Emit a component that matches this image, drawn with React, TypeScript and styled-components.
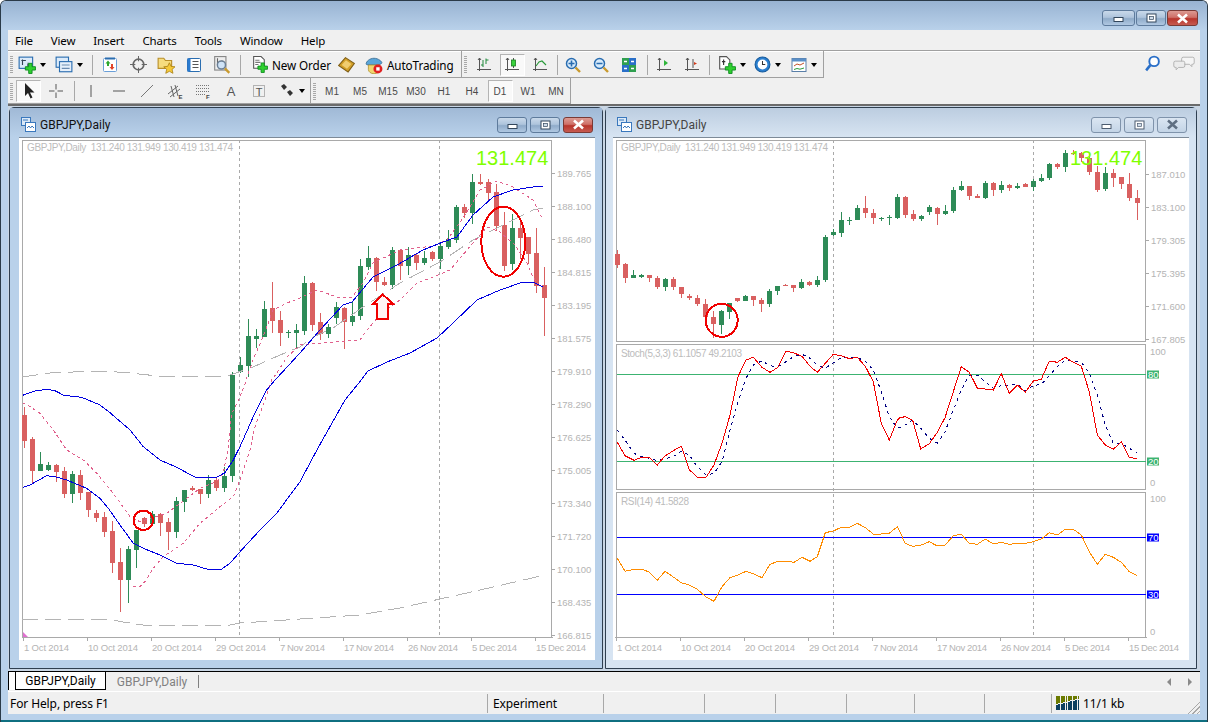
import React from 'react'
import styled, { createGlobalStyle } from 'styled-components'

const GlobalStyle = createGlobalStyle`
  html, body { margin: 0; padding: 0; background: #fff; overflow: hidden; }
  #root { width: 1208px; height: 722px; }
`

// candles read off the big chart: body top, body bottom, wick top, wick bottom (page y)
type Candle = { up: boolean; t: number; b: number; wt: number; wb: number }
const a = (up: number, t: number, b: number, wt: number, wb: number): Candle => ({ up: !!up, t: 380 + t / 3, b: 380 + b / 3, wt: 380 + wt / 3, wb: 380 + wb / 3 })
const c = (up: number, t: number, b: number, wt: number, wb: number): Candle => ({ up: !!up, t: 140 + t / 3, b: 140 + b / 3, wt: 140 + wt / 3, wb: 140 + wb / 3 })

const candles: Candle[] = [
  a(0, 105, 182, 80, 203), a(0, 177, 272, 171, 310), a(1, 252, 272, 216, 272), a(1, 255, 270, 247, 272),
  a(0, 255, 276, 252, 305), a(0, 273, 341, 262, 353), a(1, 282, 341, 273, 368), a(0, 285, 339, 270, 360),
  a(0, 336, 389, 335, 411), a(0, 400, 414, 390, 426), a(0, 411, 456, 395, 471), a(0, 453, 548, 423, 579),
  a(0, 546, 599, 505, 695), a(1, 507, 600, 499, 669), a(1, 450, 510, 450, 564), a(0, 414, 432, 411, 441),
  a(1, 402, 432, 393, 432), a(0, 402, 429, 399, 468), a(0, 426, 456, 414, 510), a(1, 363, 456, 351, 474),
  a(1, 330, 366, 330, 396), a(0, 324, 330, 318, 333), a(0, 327, 342, 327, 372), a(1, 300, 342, 285, 354),
  a(0, 300, 324, 294, 333), a(1, 288, 324, 261, 336), c(1, 706, 1008, 696, 1026),
  c(1, 675, 696, 652, 700), c(1, 588, 678, 537, 712), c(1, 588, 597, 567, 624), c(1, 507, 591, 483, 591),
  c(0, 504, 543, 426, 579), c(0, 540, 579, 513, 618), c(1, 575, 578, 570, 594), c(1, 570, 579, 552, 624),
  c(1, 429, 573, 408, 585), c(0, 429, 555, 426, 573), c(0, 546, 582, 519, 600), c(1, 561, 582, 552, 594),
  c(1, 501, 534, 486, 552), c(0, 504, 546, 501, 627), c(1, 528, 546, 486, 558), c(1, 378, 528, 357, 540),
  c(1, 354, 381, 318, 390), c(0, 354, 426, 351, 453), c(0, 426, 435, 411, 438), c(1, 330, 435, 321, 447),
  c(0, 330, 378, 327, 420), c(1, 345, 378, 321, 405), c(0, 345, 369, 339, 390), c(1, 354, 369, 333, 375),
  c(0, 336, 358, 333, 363), c(1, 318, 358, 306, 387), c(1, 297, 321, 270, 327), c(1, 201, 300, 195, 309),
  c(0, 201, 219, 192, 234), c(1, 126, 219, 102, 252), c(0, 126, 132, 102, 135), c(0, 126, 159, 117, 183),
  c(0, 156, 258, 132, 273), c(0, 255, 378, 216, 393), c(1, 264, 372, 222, 390), c(0, 264, 294, 234, 357),
  c(0, 291, 342, 291, 372), c(0, 339, 438, 264, 459), c(0, 435, 474, 381, 587),
]

type Pts = number[][]
const z = (ox: number, oy: number, p: Pts) => p.map(([x, y]) => `${(ox + x / 3).toFixed(1)},${(oy + y / 3).toFixed(1)}`).join(' ')
const abs = (p: Pts) => p.map(([x, y]) => `${x},${y}`).join(' ')

const upperBlue = z(20, 380, [[8, 46], [45, 33], [80, 28], [105, 32], [130, 45], [150, 48], [185, 52], [240, 75], [270, 98], [330, 150], [370, 200], [420, 240], [470, 262], [530, 294], [590, 292], [615, 278], [640, 240], [660, 200], [700, 110], [740, 30], [765, 0]])
  + ' ' + abs([[276, 379], [300, 353], [320, 330], [343, 305], [352, 302], [373, 277], [397, 265], [423, 250], [443, 242], [457, 237], [473, 215], [493, 197], [513, 190], [533, 187], [543, 186]])
const lowerBlue = z(20, 380, [[8, 322], [30, 315], [80, 287], [105, 290], [140, 300], [200, 325], [240, 355], [265, 385], [300, 435], [340, 490], [370, 505], [420, 525], [470, 550], [520, 555], [560, 567], [605, 567], [630, 550], [660, 515], [720, 450], [770, 400], [840, 305]])
  + ' ' + abs([[318, 448], [345, 400], [362, 379], [368, 371], [387, 362], [410, 353], [437, 338], [453, 323], [477, 300], [500, 290], [523, 282], [533, 282], [543, 287]])
const upperPink = z(20, 380, [[8, 68], [30, 80], [60, 100], [100, 150], [140, 210], [190, 240], [230, 280], [280, 340], [330, 410], [360, 425], [400, 412], [440, 400], [480, 370], [540, 325], [590, 305], [610, 280], [625, 200], [635, 100], [660, 50], [680, 0]])
  + ' ' + abs([[247, 377], [253, 360], [263, 337], [273, 310], [287, 303], [300, 298], [317, 290], [337, 297], [352, 297], [363, 283], [373, 263], [400, 250], [433, 246], [447, 240], [463, 218], [480, 190], [497, 181], [513, 187], [533, 200], [542, 218]])
const lowerPink = z(20, 380, [[340, 618], [360, 620], [375, 605], [400, 565], [430, 530], [490, 490], [540, 430], [600, 380], [640, 350], [660, 300], [690, 210], [705, 140], [735, 60], [755, 0]])
  + ' ' + abs([[277, 373], [287, 357], [300, 345], [333, 342], [360, 340], [367, 330], [380, 315], [400, 300], [417, 283], [433, 277], [450, 270], [473, 243], [487, 227], [500, 232], [515, 245], [527, 263], [533, 277], [538, 285]])
const grayTop = abs([[22, 377], [50, 373], [73, 372], [103, 371], [130, 373], [167, 377], [227, 376], [253, 367], [280, 355], [300, 347], [313, 337], [333, 328], [363, 307], [400, 283], [440, 262], [473, 240], [513, 220], [533, 210], [543, 208]])
const grayBottom = abs([[22, 619], [108, 619], [123, 622], [143, 625], [230, 625], [240, 623], [273, 621], [300, 619], [360, 615], [400, 608], [480, 590], [545, 575]])

const stochMain = z(610, 345, [[22, 292], [45, 332], [72, 346], [95, 337], [118, 337], [142, 360], [165, 333], [190, 317], [214, 304], [238, 374], [262, 397], [288, 397], [312, 360], [336, 295], [360, 210], [384, 95], [408, 45], [430, 37], [456, 67], [480, 82], [504, 67], [528, 18], [552, 24], [576, 34], [600, 64], [622, 82], [646, 55], [670, 28], [694, 32], [718, 41], [742, 37], [766, 64], [790, 110], [814, 235], [838, 285], [862, 225]])
  + ' ' + z(900, 345, [[0, 218], [15, 215], [38, 226], [62, 312], [88, 296], [112, 262], [135, 218], [184, 65], [208, 82], [232, 129], [256, 132], [280, 135], [304, 86], [328, 145], [352, 120], [376, 142], [400, 108], [424, 103], [448, 48], [472, 52], [496, 37], [520, 52], [544, 64], [568, 140], [592, 270], [616, 300], [640, 313], [664, 290], [688, 337], [710, 341]])
const stochSignal = z(610, 345, [[22, 255], [45, 285], [72, 325], [95, 335], [118, 340], [142, 347], [190, 335], [214, 318], [238, 330], [262, 365], [288, 390], [312, 385], [336, 350], [360, 255], [384, 170], [408, 100], [432, 58], [456, 48], [480, 62], [504, 65], [528, 50], [552, 34], [576, 28], [600, 40], [622, 60], [646, 70], [670, 53], [694, 38], [718, 36], [742, 38], [766, 48], [790, 75], [814, 140], [838, 215], [862, 250]])
  + ' ' + z(900, 345, [[10, 244], [38, 225], [62, 250], [88, 280], [112, 295], [135, 260], [160, 195], [184, 135], [208, 90], [232, 90], [256, 110], [280, 130], [304, 122], [352, 118], [376, 138], [400, 122], [424, 118], [448, 92], [472, 65], [496, 45], [520, 47], [544, 52], [568, 85], [592, 150], [616, 240], [640, 295], [664, 295], [688, 310], [710, 322]])
const rsiLine = z(610, 345, [[22, 640], [45, 679], [72, 673], [95, 673], [118, 681], [142, 706], [165, 679], [190, 696], [214, 713], [238, 720], [262, 733], [288, 756], [312, 769], [336, 725], [360, 698], [384, 690], [408, 679], [430, 686], [456, 698], [480, 658], [504, 649], [528, 649], [552, 652], [576, 637], [600, 649], [622, 635], [646, 563], [670, 558], [694, 547], [718, 547], [742, 535], [766, 548], [790, 567], [814, 567], [838, 565], [862, 545]])
  + ' ' + z(900, 345, [[0, 560], [15, 595], [38, 604], [62, 601], [88, 590], [112, 603], [135, 601], [160, 572], [184, 568], [208, 595], [232, 598], [256, 582], [280, 597], [304, 592], [328, 598], [352, 595], [376, 595], [400, 590], [424, 582], [448, 563], [472, 570], [496, 553], [520, 553], [544, 570], [568, 620], [592, 658], [616, 628], [640, 637], [664, 652], [688, 680], [710, 691]])

const dates = ['1 Oct 2014', '10 Oct 2014', '20 Oct 2014', '29 Oct 2014', '7 Nov 2014', '17 Nov 2014', '26 Nov 2014', '5 Dec 2014', '15 Dec 2014']
const leftPrices = ['189.765', '188.100', '186.480', '184.815', '183.195', '181.575', '179.910', '178.290', '176.625', '175.005', '173.340', '171.720', '170.100', '168.435', '166.815']
const leftPriceY = [173, 206, 239, 272, 305, 338, 371, 404, 437, 470, 503, 536, 569, 602, 635]
const rightPrices = ['187.010', '183.100', '179.305', '175.395', '171.600', '167.805']
const rightPriceY = [174, 207, 240, 273, 306, 339]

const AxisText = styled.text`
  font-family: 'Liberation Sans', sans-serif;
  font-size: 9.5px;
  fill: #b4b4b4;
`

const HeadText = styled.text`
  font-family: 'Liberation Sans', sans-serif;
  font-size: 10px;
  fill: #bcbcbc;
`

const BigPrice = styled.text`
  font-family: 'Liberation Sans', sans-serif;
  font-size: 20px;
  fill: #7fff00;
`

const TagText = styled.text`
  font-family: 'Liberation Sans', sans-serif;
  font-size: 9.5px;
  fill: #fff;
`

const FibMark = styled.text`
  font-family: 'Liberation Sans', sans-serif;
  font-size: 6px;
  font-weight: 700;
  fill: #444;
`

const IconLetter = styled.text<{ $small?: boolean }>`
  font-family: 'Liberation Sans', sans-serif;
  font-size: ${(p) => (p.$small ? 11 : 13)}px;
  font-weight: 400;
  text-anchor: middle;
  fill: #555;
`

// the chart lines are GDI lines in the picture: no smoothing
const Curve = styled.polyline`
  fill: none;
  shape-rendering: crispEdges;
`

const RedCircle = styled.ellipse`
  fill: none;
  stroke: #f00000;
  stroke-width: 2;
  shape-rendering: crispEdges;
`

function Candles({ x0, map }: { x0: number; map: (y: number) => number }) {
  return (
    <g shapeRendering="crispEdges">
      {candles.map((k, i) => {
        const x = x0 + i * 8
        const col = k.up ? '#2e8b57' : '#d96060'
        return (
          <g key={i}>
            <rect x={x} y={map(k.wt)} width={1} height={Math.max(1, map(k.wb) - map(k.wt))} fill={col} />
            <rect x={x - 2} y={map(k.t)} width={5} height={Math.max(1, map(k.b) - map(k.t))} fill={col} />
          </g>
        )
      })}
    </g>
  )
}

function TimeAxis({ x0, bottom, right }: { x0: number; bottom: number; right: number }) {
  return (
    <g>
      {dates.map((d, i) => {
        const x = x0 + i * 64
        return (
          <g key={d}>
            <rect x={x} y={bottom} width={1} height={3} fill="#a9a9a9" />
            <AxisText x={x + 1} y={bottom + 13} textLength={d.length > 10 ? 50 : 45}>{d}</AxisText>
          </g>
        )
      })}
      <rect x={x0 - 1} y={bottom - 1} width={right - x0 + 2} height={1} fill="#a9a9a9" />
    </g>
  )
}

function LeftChart() {
  return (
    <ChartSvg viewBox="19 138 576 521" width={576} height={521}>
      <g stroke="#a9a9a9" fill="none" shapeRendering="crispEdges">
        <path d="M239.5 140V637M439.5 140V637" strokeDasharray="3 3" />
        <path d="M22.5 140H551.5V637M22.5 140V637" />
      </g>
      <HeadText x={27} y={151} textLength={206}>GBPJPY,Daily&#160;&#160;131.240 131.949 130.419 131.474</HeadText>
      <BigPrice x={476} y={165}>131.474</BigPrice>
      <Candles x0={24} map={(y) => y} />
      <Curve points={grayTop} stroke="#b4b4b4" strokeDasharray="16 7" />
      <Curve points={grayBottom} stroke="#b4b4b4" strokeDasharray="16 7" />
      <Curve points={upperPink} stroke="#e0608c" strokeDasharray="3 3" />
      <Curve points={lowerPink} stroke="#e0608c" strokeDasharray="3 3" />
      <Curve points={upperBlue} stroke="#0000e0" />
      <Curve points={lowerBlue} stroke="#0000e0" />
      <RedCircle cx={143.3} cy={520.3} rx={9.7} ry={9.7} />
      <RedCircle cx={503.3} cy={241.7} rx={22} ry={35} />
      <path d="M382.7 294.5L372.7 304H377.3V319H388.3V304H393.3Z" fill="#fff5f5" stroke="#f00000" strokeWidth={2} shapeRendering="crispEdges" />
      <path d="M23 632v6h6z" fill="#e070d0" />
      {leftPrices.map((p, i) => (
        <g key={p}>
          <rect x={552} y={leftPriceY[i]} width={3} height={1} fill="#a9a9a9" />
          <AxisText x={557} y={leftPriceY[i] + 3.5}>{p}</AxisText>
        </g>
      ))}
      <TimeAxis x0={23} bottom={638} right={552} />
    </ChartSvg>
  )
}

function RightChart() {
  return (
    <ChartSvg viewBox="613 138 576 521" width={576} height={521}>
      <g stroke="#a9a9a9" fill="none" shapeRendering="crispEdges">
        <rect x={616.5} y={140.5} width={529} height={201} fill="#fff" />
        <rect x={616.5} y={344.5} width={529} height={145} fill="#fff" />
        <rect x={616.5} y={492.5} width={529} height={145} fill="#fff" />
        <path d="M833.5 140V637M1033.5 140V637" strokeDasharray="3 3" />
      </g>
      <HeadText x={621} y={151} textLength={207}>GBPJPY,Daily&#160;&#160;131.240 131.949 130.419 131.474</HeadText>
      <Candles x0={617} map={(y) => 190 + (y - 267) * 0.43} />
      <BigPrice x={1070} y={165}>131.474</BigPrice>
      <RedCircle cx={721.7} cy={320.3} rx={16} ry={16.5} />
      {rightPrices.map((p, i) => (
        <g key={p}>
          <rect x={1146} y={rightPriceY[i]} width={3} height={1} fill="#a9a9a9" />
          <AxisText x={1151} y={rightPriceY[i] + 3.5}>{p}</AxisText>
        </g>
      ))}

      <HeadText x={621} y={357} textLength={121}>Stoch(5,3,3) 61.1057 49.2103</HeadText>
      <g shapeRendering="crispEdges">
        <rect x={617} y={374} width={529} height={1} fill="#3cb371" />
        <rect x={617} y={461} width={529} height={1} fill="#3cb371" />
        <rect x={617} y={537} width={529} height={1} fill="#0000ff" />
        <rect x={617} y={594} width={529} height={1} fill="#0000ff" />
      </g>
      <Curve points={stochSignal} stroke="#000080" strokeDasharray="3 4" />
      <Curve points={stochMain} stroke="#f00000" />
      <AxisText x={1150} y={355}>100</AxisText>
      <LevelTag x={1147} y={370.5} color="#3cb371" label="80" />
      <LevelTag x={1147} y={457.5} color="#3cb371" label="20" />
      <AxisText x={1150} y={486}>0</AxisText>

      <HeadText x={621} y={505} textLength={68}>RSI(14) 41.5828</HeadText>
      <Curve points={rsiLine} stroke="#ff8c00" />
      <AxisText x={1150} y={502}>100</AxisText>
      <LevelTag x={1147} y={533.5} color="#0000ff" label="70" />
      <LevelTag x={1147} y={590.5} color="#0000ff" label="30" />
      <AxisText x={1150} y={635}>0</AxisText>
      <TimeAxis x0={616} bottom={638} right={1146} />
    </ChartSvg>
  )
}

function LevelTag({ x, y, color, label }: { x: number; y: number; color: string; label: string }) {
  return (
    <g>
      <rect x={x} y={y} width={12} height={8} fill={color} />
      <TagText x={x + 1} y={y + 7.5}>{label}</TagText>
    </g>
  )
}

/* toolbar drawings */
const Plus = ({ x = 0, y = 0 }: { x?: number; y?: number }) => (
  <path transform={`translate(${x} ${y})`} d="M3 0h3v3h3v3H6v3H3V6H0V3h3z" fill="#2fd02f" stroke="#0b8a1e" strokeWidth={0.8} />
)
const Axes = () => <path d="M3.5 1v13M1 12.5h14M2 3l1.5-2L5 3" fill="none" stroke="#555" strokeWidth={1} />

const icons: Record<string, React.ReactNode> = {
  newChart: (<><rect x={1} y={1} width={12} height={10} fill="#dcebfa" stroke="#2a6db0" /><path d="M3 4h4M4 3v5M8 8h3M9 6v4" stroke="#345" fill="none" /><Plus x={6.5} y={6.5} /></>),
  profiles: (<><rect x={1} y={1} width={11} height={9} fill="#dcebfa" stroke="#2a6db0" /><rect x={4} y={5} width={11} height={9} fill="#e6f0fb" stroke="#2a6db0" /><path d="M6 8h7M6 11h7" stroke="#6a8bb0" /></>),
  market: (<><rect x={1.5} y={1.5} width={13} height={13} rx={1} fill="#fff" stroke="#6a9fd8" /><path d="M3 1.5h10" stroke="#2a6db0" strokeWidth={2} /><path d="M6 3.5l2.5 3H7V9H5V6.5H3.5z" fill="#2fa82f" /><path d="M10 13l-2.5-3H9V7h2v3h1.5z" fill="#e0442a" /></>),
  navigator: (<><circle cx={8} cy={8} r={5} fill="none" stroke="#666" strokeWidth={1.6} /><path d="M8 0v5M8 11v5M0 8h5M11 8h5" stroke="#666" strokeWidth={1} /></>),
  favorites: (<><path d="M1 2h5l1.5 2H13v7H1z" fill="#f6dc7e" stroke="#b98f2a" /><path d="M11 6l1.5 3.2 3.5.4-2.6 2.3.8 3.5-3.2-1.8-3.2 1.8.8-3.5L6 9.6l3.5-.4z" fill="#f5c93a" stroke="#a87e10" strokeWidth={0.7} /></>),
  terminal: (<><rect x={1.5} y={1.5} width={13} height={13} rx={1} fill="#fff" stroke="#2a6db0" /><rect x={1.5} y={1.5} width={3} height={13} fill="#2a7bd0" /><path d="M6.5 4.5h6M6.5 7.5h6M6.5 10.5h6" stroke="#555" /></>),
  tester: (<><rect x={1.5} y={0.5} width={10} height={12} fill="#eee" stroke="#888" /><path d="M4 2v6M8 4v5" stroke="#666" /><circle cx={7.5} cy={8} r={3.6} fill="#cfe3f7" stroke="#6b7f95" strokeWidth={1.3} /><path d="M10.5 11l4 4" stroke="#c99a2e" strokeWidth={2} /></>),
  newOrder: (<><path d="M2.5 .5h7l3 3v8h-10z" fill="#fff" stroke="#555" /><path d="M4 4h4M4 6h5M4 8h3" stroke="#777" /><Plus x={6.5} y={6.5} /></>),
  editor: (<><path d="M.5 9L7 1.5l8.5 5.5-6 8z" fill="#d3a028" stroke="#80601a" /><path d="M3.5 8.5L7.5 4l5 3.5-4 4.5z" fill="#f0cd70" /></>),
  auto: (<><path d="M1 7c0-2 3-5 7-5s7 3 7 4c0 1-2 2-7 2S1 8 1 7z" fill="#5aa5d8" stroke="#34688f" strokeWidth={0.7} /><path d="M3 8h10v4a4 3 0 0 1-10 0z" fill="#f0d56e" stroke="#b1922f" strokeWidth={0.7} /><circle cx={11.5} cy={11.5} r={4} fill="#e02020" /><rect x={10} y={10} width={3} height={3} fill="#fff" /></>),
  bars: (<><Axes /><path d="M7 3v7M7 8H5M10 1.5V7M10 3h2.5" stroke="#1f8a3a" fill="none" /></>),
  candle: (<><Axes /><path d="M9.5 1v10" stroke="#555" /><rect x={7.5} y={3} width={4} height={6} fill="#39d23c" stroke="#1a7a1f" strokeWidth={0.8} /></>),
  line: (<><Axes /><path d="M4 9l3-4 3-1 4 4" fill="none" stroke="#2a9a3a" strokeWidth={1.1} /></>),
  zoomIn: (<><circle cx={6.5} cy={6.5} r={5} fill="#d6eafb" stroke="#2a6db0" strokeWidth={1.5} /><path d="M6.5 3.5v6M3.5 6.5h6" stroke="#2a6db0" strokeWidth={1.6} /><path d="M10.5 10.5l4.5 4.5" stroke="#c99a2e" strokeWidth={2.4} /></>),
  zoomOut: (<><circle cx={6.5} cy={6.5} r={5} fill="#d6eafb" stroke="#2a6db0" strokeWidth={1.5} /><path d="M3.5 6.5h6" stroke="#2a6db0" strokeWidth={1.6} /><path d="M10.5 10.5l4.5 4.5" stroke="#c99a2e" strokeWidth={2.4} /></>),
  tile: (<><rect x={1} y={1} width={7} height={7} fill="#2f9f4f" /><rect x={8} y={1} width={7} height={7} fill="#2a6fc8" /><rect x={1} y={8} width={7} height={7} fill="#2a6fc8" /><rect x={8} y={8} width={7} height={7} fill="#2f9f4f" /><path d="M3 4.5h3M10 4.5h3M3 11.5h3M10 11.5h3" stroke="#fff" strokeWidth={1.5} /></>),
  scroll: (<><Axes /><path d="M8 3v6l4-3z" fill="#2fb53a" /></>),
  shift: (<><Axes /><path d="M9 2v9" stroke="#555" /><path d="M10 5l3 1.5-3 1.5z" fill="#d23c1c" /></>),
  indicator: (<><path d="M1.5 .5h6l3 3v8h-9z" fill="#fff" stroke="#555" /><path d="M5 3v5M3.5 5h3" stroke="#333" /><Plus x={6.5} y={6.5} /></>),
  clock: (<><circle cx={8} cy={8} r={7} fill="#2a7fd0" stroke="#155a9c" /><circle cx={8} cy={8} r={4.6} fill="#fff" /><path d="M8 4.8V8h2.6" fill="none" stroke="#333" /></>),
  template: (<><rect x={1} y={1.5} width={14} height={13} fill="#fff" stroke="#5a7fa8" /><rect x={1} y={1.5} width={14} height={3} fill="#5a8fc8" /><path d="M3 9l3-2 3 1 4-2" fill="none" stroke="#c0502a" /><path d="M3 12.5l3-1 3 .7 4-1.2" fill="none" stroke="#2a9a3a" /></>),
  cursor: <path d="M4 0v13l3-3 2.5 5.5 2-1L9 9.5h4.5z" fill="#222" />,
  cross: <path d="M8 1v5.5M8 9.5V15M1 8h5.5M9.5 8H15" stroke="#555" fill="none" />,
  vline: <path d="M8 2v12" stroke="#555" />,
  hline: <path d="M2 8h12" stroke="#555" />,
  trend: <path d="M2 14L14 2" stroke="#777" />,
  channel: (<><path d="M1 11L11 3M3 14L13 6M4 3l3 11M8 2l3 11" stroke="#666" fill="none" /><FibMark x={11.5} y={15.5}>E</FibMark></>),
  fib: (<><path d="M1 2.5h13M1 5.5h13M1 8.5h13M1 11.5h9" stroke="#777" strokeDasharray="1 1" fill="none" /><FibMark x={11} y={15.5}>F</FibMark></>),
  text: <IconLetter x={8} y={13}>A</IconLetter>,
  label: (<><rect x={2.5} y={2.5} width={11} height={11} fill="none" stroke="#777" strokeDasharray="1 1" /><IconLetter x={8} y={12.5} $small>T</IconLetter></>),
  shapes: <path d="M2 3l3-2 3 3-3 3zM8 9l3-2 3 3-3 3z" fill="#333" />,
  search: (<><circle cx={9.5} cy={6} r={4.5} fill="#fff" stroke="#2a6fc8" strokeWidth={1.8} /><path d="M6 9.5l-4 5" stroke="#2a6fc8" strokeWidth={2.4} /></>),
}

const Icon = ({ name, size = 16 }: { name: string; size?: number }) => (
  <svg width={size} height={size} viewBox="0 0 16 16">{icons[name]}</svg>
)

const Tool = ({ name, w = 28, size, pressed }: { name: string; w?: number; size?: number; pressed?: boolean }) => (
  <ToolButton $w={w} $pressed={pressed}><Icon name={name} size={size} /></ToolButton>
)

const DropTool = ({ name, w, pad, size }: { name: string; w: number; pad: number; size?: number }) => (
  <DropButton $w={w} $pad={pad}><Icon name={name} size={size} /><Arrow /></DropButton>
)

const CaptionGlyph = ({ kind, dim }: { kind: string; dim?: boolean }) => {
  const ink = dim ? '#4c5c70' : '#33475c'
  if (kind === 'close') {
    return (
      <svg width={13} height={11} viewBox="0 0 13 11">
        <path d="M2 1.5l9 8M11 1.5l-9 8" stroke={dim ? '#5f6f82' : '#fff'} strokeWidth={2.6} />
      </svg>
    )
  }
  if (kind === 'max') {
    return (
      <svg width={11} height={10} viewBox="0 0 11 10">
        <rect x={1} y={1} width={9} height={8} fill="#fff" stroke={ink} />
        <rect x={3.5} y={3.5} width={4} height={3} fill="#cfdcea" stroke={ink} strokeWidth={0.7} />
      </svg>
    )
  }
  return (
    <svg width={11} height={10} viewBox="0 0 11 10">
      <rect x={1} y={4.5} width={9} height={4} fill="#fff" stroke={ink} />
    </svg>
  )
}

const WindowIcon = () => (
  <svg width={15} height={15} viewBox="0 0 15 15">
    <rect x={0.5} y={0.5} width={9} height={8} fill="#dbe9f7" stroke="#3a78bd" />
    <rect x={4.5} y={5.5} width={10} height={9} fill="#fff" stroke="#3a78bd" />
    <path d="M6 11l2-2 1.5 2 1.5-2 2 2" fill="none" stroke="#3a78bd" />
    <path d="M2 3h5" stroke="#3a78bd" />
  </svg>
)

const ChartWindow = ({ active, children }: { active?: boolean; children: React.ReactNode }) => (
  <ChildFrame $active={active}>
    <ChildTitle $active={active}>
      <WindowIcon />
      <ChildName $active={active}>GBPJPY,Daily</ChildName>
      <ChildButtons>
        <CaptionButton $w={30} $h={16} $dim={!active}><CaptionGlyph kind="min" dim={!active} /></CaptionButton>
        <CaptionButton $w={30} $h={16} $dim={!active}><CaptionGlyph kind="max" dim={!active} /></CaptionButton>
        <CaptionButton $w={30} $h={16} $dim={!active} $close={active}><CaptionGlyph kind="close" dim={!active} /></CaptionButton>
      </ChildButtons>
    </ChildTitle>
    <ChartBody>{children}</ChartBody>
  </ChildFrame>
)

export default function App() {
  return (
    <>
      <GlobalStyle />
      <MainWindow>
        <TitleBar>
          <CaptionButton $w={33} $h={16}><CaptionGlyph kind="min" /></CaptionButton>
          <CaptionButton $w={30} $h={16}><CaptionGlyph kind="max" /></CaptionButton>
          <CaptionButton $w={31} $h={16} $close><CaptionGlyph kind="close" /></CaptionButton>
        </TitleBar>
        <Client>
          <MenuBar>
            {['File', 'View', 'Insert', 'Charts', 'Tools', 'Window', 'Help'].map((m) => <MenuItem key={m}>{m}</MenuItem>)}
          </MenuBar>
          <ToolRow $h={27}>
            <Band>
              <GripCell />
              <DropTool name="newChart" w={38} pad={4} size={18} />
              <DropTool name="profiles" w={36} pad={3} size={18} />
              <Sep $w={8} />
              <Tool name="market" />
              <Tool name="navigator" size={17} />
              <Tool name="favorites" size={18} />
              <Tool name="terminal" />
              <Tool name="tester" size={18} />
              <Sep $w={8} />
              <TextTool $w={88} $pad={7}><Icon name="newOrder" size={17} />New Order</TextTool>
              <Tool name="editor" w={29} size={17} />
              <TextTool $w={100} $pad={4}><Icon name="auto" size={18} />AutoTrading</TextTool>
            </Band>
            <Band>
              <GripCell $w={8} />
              <Tool name="bars" />
              <Tool name="candle" pressed />
              <Tool name="line" />
              <Sep $w={5} />
              <Tool name="zoomIn" />
              <Tool name="zoomOut" />
              <Tool name="tile" />
              <Sep $w={7} />
              <Tool name="scroll" />
              <Tool name="shift" />
              <Sep $w={6} />
              <DropTool name="indicator" w={36} pad={6} size={18} />
              <DropTool name="clock" w={37} pad={6} size={17} />
              <DropTool name="template" w={38} pad={6} />
            </Band>
            <RightTools>
              <Icon name="search" size={17} />
              <svg width={22} height={15} viewBox="0 0 28 18">
                <path d="M13 1h12a2 2 0 0 1 2 2v5a2 2 0 0 1-2 2h-1v3l-3-3h-8a2 2 0 0 1-2-2V3a2 2 0 0 1 2-2z" fill="#f5f5f5" stroke="#a5a5a5" />
                <path d="M3 6h10a2 2 0 0 1 2 2v4a2 2 0 0 1-2 2H7l-3 3v-3H3a2 2 0 0 1-2-2V8a2 2 0 0 1 2-2z" fill="#ececec" stroke="#a5a5a5" />
              </svg>
            </RightTools>
          </ToolRow>
          <ToolRow $h={26}>
            <Band>
              <GripCell $w={8} />
              <ToolButton $w={25} $pressed><Icon name="cursor" /></ToolButton>
              <Tool name="cross" w={29} />
              <Sep $w={7} />
              <Tool name="vline" />
              <Tool name="hline" />
              <Tool name="trend" />
              <Tool name="channel" />
              <Tool name="fib" />
              <Tool name="text" />
              <Tool name="label" />
              <DropTool name="shapes" w={37} pad={6} />
            </Band>
            <Band>
              <GripCell $w={7} />
              {['M1', 'M5', 'M15', 'M30', 'H1', 'H4', 'D1', 'W1', 'MN'].map((p) => (
                <PeriodButton key={p} $pressed={p === 'D1'}>{p}</PeriodButton>
              ))}
            </Band>
          </ToolRow>
          <Mdi>
            <ChartWindow active><LeftChart /></ChartWindow>
            <ChartWindow><RightChart /></ChartWindow>
          </Mdi>
          <TabBar>
            <TabStub />
            <ActiveTab>GBPJPY,Daily</ActiveTab>
            <Tab>GBPJPY,Daily</Tab>
            <TabDivider />
            <TabScroll>
              <svg width={26} height={10} viewBox="0 0 26 10">
                <path d="M4 1v8L0 5zM21 1v8l4-4z" fill="#8a8a8a" />
              </svg>
            </TabScroll>
          </TabBar>
          <StatusBar>
            <StatusCell $w={480} $first>For Help, press F1</StatusCell>
            <StatusCell $w={116}>Experiment</StatusCell>
            <StatusCell $w={101} />
            <StatusCell $w={71} />
            <StatusCell $w={71} />
            <StatusCell $w={68} />
            <StatusCell $w={70} />
            <StatusCell $w={67} />
            <ConnCell>
              <svg width={24} height={14} viewBox="0 0 24 14" shapeRendering="crispEdges">
                {Array.from({ length: 10 }, (_, i) => (
                  <g key={i}>
                    <rect x={i * 2.4} y={0} width={1.8} height={8 - i * 0.6} fill="#6b7a00" />
                    <rect x={i * 2.4} y={9 - i * 0.6} width={1.8} height={5 + i * 0.6} fill="#0c3f60" />
                  </g>
                ))}
              </svg>
              11/1 kb
            </ConnCell>
            <SizeGrip />
          </StatusBar>
        </Client>
        <BottomEdge />
      </MainWindow>
    </>
  )
}

const MainWindow = styled.div`
  width: 1208px;
  height: 722px;
  box-sizing: border-box;
  display: flex;
  flex-direction: column;
  background: #b9d1ea;
  border-top: 1px solid #2a3a48;
  border-left: 1px solid #2a3a48;
  border-right: 1px solid #2a3a48;
  border-radius: 6px 6px 0 0;
  overflow: hidden;
`

const TitleBar = styled.div`
  height: 29px;
  flex: none;
  box-sizing: border-box;
  padding: 9px 9px 0 0;
  display: flex;
  justify-content: flex-end;
  align-items: flex-start;
  gap: 1px;
  background: linear-gradient(#98b3d2, #b9d1ea);
`

const CaptionButton = styled.div<{ $w: number; $h: number; $close?: boolean; $dim?: boolean }>`
  width: ${(p) => p.$w}px;
  height: ${(p) => p.$h}px;
  box-sizing: border-box;
  display: flex;
  align-items: center;
  justify-content: center;
  border: 1px solid ${(p) => (p.$close ? '#7a3a35' : p.$dim ? '#7f93ab' : '#5e7b9c')};
  border-radius: 3px;
  background: ${(p) =>
    p.$close
      ? 'linear-gradient(#dc9a92 0%, #cf7068 45%, #b8352c 55%, #c65a50 100%)'
      : p.$dim
        ? 'linear-gradient(#dbe6f2, #c3d4e6)'
        : 'linear-gradient(#c9d9ea 0%, #aec4dc 45%, #8fabc9 55%, #b0c8e2 100%)'};
`

const Client = styled.div`
  flex: 1;
  min-height: 0;
  margin: 0 7px;
  display: flex;
  flex-direction: column;
  background: #f0f0f0;
  font-family: 'Noto Sans', 'Liberation Sans', sans-serif;
`

const MenuBar = styled.div`
  height: 20px;
  flex: none;
  display: flex;
  align-items: center;
  padding-left: 7px;
  gap: 18px;
  border-bottom: 1px solid #a0a0a0;
  box-shadow: 0 1px 0 #fff;
`

const MenuItem = styled.span`
  font-size: 11.5px;
  letter-spacing: -0.15px;
  color: #000;
`

const ToolRow = styled.div<{ $h: number }>`
  height: ${(p) => p.$h}px;
  flex: none;
  display: flex;
  align-items: stretch;
`

const Band = styled.div`
  display: flex;
  align-items: center;
  box-sizing: border-box;
  height: 100%;
  padding-top: 1px;
  border-right: 1px solid #a0a0a0;
  border-bottom: 1px solid #a0a0a0;
`

const GripCell = styled.div<{ $w?: number }>`
  width: ${(p) => p.$w ?? 6}px;
  height: 100%;
  flex: none;
  position: relative;

  &::before {
    content: '';
    position: absolute;
    left: 2px;
    top: 4px;
    bottom: 3px;
    width: 3px;
    background: repeating-linear-gradient(#a8a8a8 0 1px, transparent 1px 2px);
  }
`

const ToolButton = styled.div<{ $w: number; $pressed?: boolean }>`
  width: ${(p) => (p.$pressed && p.$w === 28 ? 25 : p.$w)}px;
  margin: ${(p) => (p.$pressed && p.$w === 28 ? '0 1.5px' : '0')};
  height: ${(p) => (p.$pressed ? 22 : 24)}px;
  flex: none;
  box-sizing: border-box;
  display: flex;
  align-items: center;
  justify-content: center;
  ${(p) =>
    p.$pressed
      ? `
    background: #f9f9f9;
    border: 1px solid;
    border-color: #b4b4b4 #fff #fff #b4b4b4;
  `
      : ''}
`

const DropButton = styled.div<{ $w: number; $pad: number }>`
  width: ${(p) => p.$w}px;
  padding-left: ${(p) => p.$pad}px;
  box-sizing: border-box;
  flex: none;
  display: flex;
  align-items: center;
  gap: 4px;
`

const Arrow = styled.span`
  width: 0;
  height: 0;
  border-left: 3.5px solid transparent;
  border-right: 3.5px solid transparent;
  border-top: 4px solid #000;
`

const TextTool = styled.div<{ $w: number; $pad: number }>`
  width: ${(p) => p.$w}px;
  padding-left: ${(p) => p.$pad}px;
  box-sizing: border-box;
  flex: none;
  display: flex;
  align-items: center;
  gap: 4px;
  font-size: 11.7px;
  letter-spacing: -0.1px;
  white-space: nowrap;
  color: #000;
`

const Sep = styled.div<{ $w: number }>`
  width: ${(p) => p.$w}px;
  height: 20px;
  flex: none;
  position: relative;

  &::before {
    content: '';
    position: absolute;
    left: 50%;
    top: 0;
    bottom: 0;
    width: 1px;
    background: #a8a8a8;
  }
`

const RightTools = styled.div`
  margin-left: auto;
  display: flex;
  align-items: center;
  gap: 12px;
  padding: 0 5px 2px 0;
`

const PeriodButton = styled.div<{ $pressed?: boolean }>`
  width: ${(p) => (p.$pressed ? 25 : 28)}px;
  margin: ${(p) => (p.$pressed ? '0 1.5px' : '0')};
  height: ${(p) => (p.$pressed ? 22 : 24)}px;
  box-sizing: border-box;
  flex: none;
  display: flex;
  align-items: center;
  justify-content: center;
  font-family: 'Liberation Sans', sans-serif;
  font-size: 10px;
  color: #4a4a4a;
  ${(p) =>
    p.$pressed
      ? `
    background: #f9f9f9;
    border: 1px solid;
    border-color: #b4b4b4 #fff #fff #b4b4b4;
  `
      : ''}
`

const Mdi = styled.div`
  flex: 1;
  min-height: 0;
  display: flex;
  gap: 2px;
  padding: 1px 0 2px 1px;
  border-top: 2px solid #6b6b6b;
  background: #c9d6e4;
`

const ChildFrame = styled.div<{ $active?: boolean }>`
  flex: none;
  width: ${(p) => (p.$active ? 594 : 592)}px;
  box-sizing: border-box;
  display: flex;
  flex-direction: column;
  border: 1px solid #2f3f50;
  border-radius: 5px 5px 0 0;
  padding: 0 7px 8px ${(p) => (p.$active ? 9 : 7)}px;
  background: ${(p) => (p.$active ? '#b9d1ea' : '#d7e4f2')};
`

const ChildTitle = styled.div<{ $active?: boolean }>`
  height: 29px;
  box-sizing: border-box;
  flex: none;
  margin: 0 -7px 0 ${(p) => (p.$active ? -9 : -7)}px;
  padding: 4px 9px 0 11px;
  display: flex;
  align-items: center;
  gap: 4px;
  background: ${(p) => (p.$active ? 'linear-gradient(#a0b9d6, #b9d1ea)' : 'linear-gradient(#bccde0, #d7e4f2)')};
`

const ChildName = styled.span<{ $active?: boolean }>`
  font-family: 'Roboto', 'Liberation Sans', sans-serif;
  font-size: 12px;
  color: ${(p) => (p.$active ? '#111' : '#444')};
`

const ChildButtons = styled.div`
  margin-left: auto;
  display: flex;
  gap: 3px;
`

const ChartBody = styled.div`
  flex: 1;
  min-height: 0;
  background: #fff;
  border-top: 1px solid #7d8a98;
  display: flex;
`

const ChartSvg = styled.svg`
  display: block;
  flex: none;
`

const TabBar = styled.div`
  height: 19px;
  flex: none;
  display: flex;
  align-items: stretch;
  border-top: 1px solid #000;
  border-bottom: 1px solid #fff;
  font-size: 12px;
  font-family: 'Roboto', 'Liberation Sans', sans-serif;
`

const TabStub = styled.div`
  width: 7px;
  box-sizing: border-box;
  background: #fff;
  border-left: 1px solid #000;
  margin-bottom: 1px;
`

const ActiveTab = styled.div`
  width: 91px;
  box-sizing: border-box;
  display: flex;
  align-items: center;
  justify-content: center;
  color: #000;
  background: #fff;
  border: 1px solid #000;
  border-top: none;
  margin-bottom: 1px;
`

const Tab = styled.div`
  width: 92px;
  display: flex;
  align-items: center;
  justify-content: center;
  color: #808080;
`

const TabDivider = styled.div`
  width: 1px;
  margin: 3px 0;
  background: #808080;
`

const TabScroll = styled.div`
  margin-left: auto;
  padding-right: 7px;
  display: flex;
  align-items: center;
`

const StatusBar = styled.div`
  height: 22px;
  flex: none;
  display: flex;
  align-items: center;
  font-size: 12px;
  letter-spacing: -0.1px;
  color: #000;
  position: relative;
`

const StatusCell = styled.div<{ $w: number; $first?: boolean }>`
  width: ${(p) => p.$w}px;
  height: 19px;
  box-sizing: border-box;
  flex: none;
  display: flex;
  align-items: center;
  padding-left: ${(p) => (p.$first ? 2 : 5)}px;
  border-right: 1px solid #a8a8a8;
`

const ConnCell = styled.div`
  display: flex;
  align-items: center;
  gap: 3px;
  padding-left: 4px;
`

const SizeGrip = styled.div`
  position: absolute;
  right: 0;
  bottom: 0;
  width: 14px;
  height: 14px;
  background: repeating-linear-gradient(135deg, transparent 0 2px, #a8a8a8 2px 3px);
  clip-path: polygon(100% 0, 100% 100%, 0 100%);
`

const BottomEdge = styled.div`
  height: 8px;
  flex: none;
  border-bottom: 2px solid #0f6f80;
  box-sizing: border-box;
  background: #b9d1ea;
`
